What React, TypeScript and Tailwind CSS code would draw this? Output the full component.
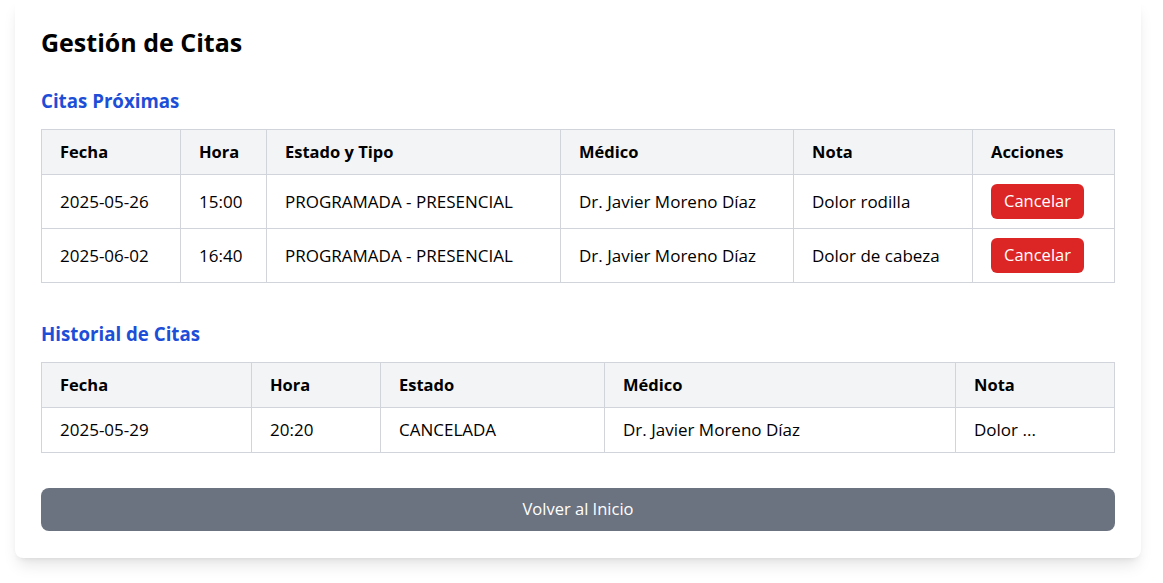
import React from "react";

const font = { fontFamily: '"Open Sans", "Noto Sans", sans-serif' };

const upcoming = [
  { fecha: "2025-05-26", hora: "15:00", estado: "PROGRAMADA - PRESENCIAL", medico: "Dr. Javier Moreno Díaz", nota: "Dolor rodilla" },
  { fecha: "2025-06-02", hora: "16:40", estado: "PROGRAMADA - PRESENCIAL", medico: "Dr. Javier Moreno Díaz", nota: "Dolor de cabeza" },
];

const th = "border border-[#d1d5db] px-[18px] py-[10px] text-left text-[16.5px] font-bold leading-6";
const td = "border border-[#d1d5db] px-[18px] py-[10px] text-[17px] leading-6";

export default function App() {
  return (
    <div className="min-h-[583px] bg-white text-black" style={font}>
      <div className="ml-[15px] w-[1126px] rounded-b-lg bg-white px-[26px] pt-[26px] pb-[27px] shadow-lg">
        <h1 className="text-[25px] font-bold leading-8">Gestión de Citas</h1>

        <h2 className="mt-[29px] text-[18.7px] font-bold leading-7 text-[#1d4ed8]">Citas Próximas</h2>
        <table className="mt-[14px] w-full table-fixed border-collapse">
          <colgroup>
            <col className="w-[139px]" />
            <col className="w-[86px]" />
            <col className="w-[294px]" />
            <col className="w-[233px]" />
            <col className="w-[179px]" />
            <col />
          </colgroup>
          <thead>
            <tr className="bg-[#f3f4f6]">
              <th className={th}>Fecha</th>
              <th className={th}>Hora</th>
              <th className={th}>Estado y Tipo</th>
              <th className={th}>Médico</th>
              <th className={th}>Nota</th>
              <th className={th}>Acciones</th>
            </tr>
          </thead>
          <tbody>
            {upcoming.map((r) => (
              <tr key={r.fecha}>
                <td className={td}>{r.fecha}</td>
                <td className={td}>{r.hora}</td>
                <td className={td}>{r.estado}</td>
                <td className={td}>{r.medico}</td>
                <td className={td}>{r.nota}</td>
                <td className="border border-[#d1d5db] px-[18px] py-[9px]">
                  <button className="flex h-[35px] w-[93px] items-center justify-center rounded-md bg-[#dc2626] text-[16.5px] text-white">
                    Cancelar
                  </button>
                </td>
              </tr>
            ))}
          </tbody>
        </table>

        <h2 className="mt-[37px] text-[18.7px] font-bold leading-7 text-[#1d4ed8]">Historial de Citas</h2>
        <table className="mt-[14px] w-full table-fixed border-collapse">
          <colgroup>
            <col className="w-[210px]" />
            <col className="w-[129px]" />
            <col className="w-[224px]" />
            <col className="w-[351px]" />
            <col />
          </colgroup>
          <thead>
            <tr className="bg-[#f3f4f6]">
              <th className={th}>Fecha</th>
              <th className={th}>Hora</th>
              <th className={th}>Estado</th>
              <th className={th}>Médico</th>
              <th className={th}>Nota</th>
            </tr>
          </thead>
          <tbody>
            <tr>
              <td className={td}>2025-05-29</td>
              <td className={td}>20:20</td>
              <td className={td}>CANCELADA</td>
              <td className={td}>Dr. Javier Moreno Díaz</td>
              <td className={td}>Dolor ...</td>
            </tr>
          </tbody>
        </table>

        <button className="mt-[35px] flex h-[43px] w-full items-center justify-center rounded-lg bg-[#6b7280] text-[16.5px] text-white">
          Volver al Inicio
        </button>
      </div>
    </div>
  );
}
